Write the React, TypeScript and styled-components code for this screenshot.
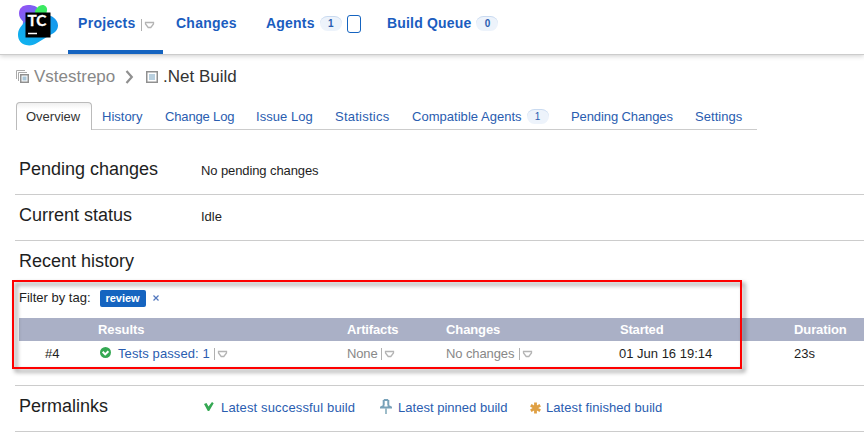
import React from 'react';
import styled, { createGlobalStyle } from 'styled-components';

const GlobalStyle = createGlobalStyle`
  * { box-sizing: border-box; }
  body {
    margin: 0;
    background: #fff;
    color: #1e1e1e;
    font: 13px/16px "Liberation Sans", Arial, sans-serif;
  }
`;

const Page = styled.div`
  width: 864px;
  height: 435px;
  overflow: hidden;
  background: #fff;
`;

const Header = styled.header`
  display: flex;
  height: 55px;
  padding-left: 18px;
  border-bottom: 1px solid #ccc;
  box-shadow: 0 1px 5px rgba(0, 0, 0, 0.2);
`;

const LogoBox = styled.a`
  width: 50px;
  padding-top: 5px;
`;

const NavItem = styled.a<{ $width: number; $active?: boolean; $after?: number }>`
  display: flex;
  align-items: center;
  width: ${p => p.$width}px;
  height: 54px;
  margin-right: ${p => p.$after ?? 0}px;
  padding: 0 0 ${p => (p.$active ? 4 : 8)}px 10px;
  border-bottom: ${p => (p.$active ? '4px' : '0')} solid #1564c0;
  color: #1b5dbf;
  font-size: 14px;
  font-weight: bold;
  white-space: nowrap;
`;

const NavText = styled.span<{ $spacing: number }>`
  letter-spacing: ${p => p.$spacing}px;
`;

const Badge = styled.span<{ $bold?: boolean; $gap: number }>`
  width: 22px;
  height: 15px;
  margin-left: ${p => p.$gap}px;
  border-top: 1px solid #c9daf0;
  border-radius: 8px;
  background: #edf3fb;
  color: #2a5db0;
  font-size: 10px;
  font-weight: ${p => (p.$bold ? 'bold' : 'normal')};
  line-height: 14px;
  letter-spacing: 0;
  text-align: center;
`;

const AgentBox = styled.span`
  width: 14px;
  height: 18px;
  margin: 2px 0 0 5px;
  border: 1px solid #1564c0;
  border-radius: 3px;
`;

const Breadcrumbs = styled.nav`
  display: flex;
  align-items: center;
  height: 47px;
  padding: 0 0 4px 16px;
  font-size: 17px;
  line-height: 20px;
  white-space: nowrap;
`;

const CrumbLink = styled.a`
  width: 86px;
  margin-left: 5px;
  color: #888;
`;

const CrumbCurrent = styled.span`
  margin-left: 5px;
  color: #333;
`;

const Chevron = styled.svg`
  margin: 0 12px 0 5px;
`;

const Tabs = styled.nav`
  display: flex;
  width: 741px;
  height: 28px;
  margin-left: 16px;
  border-bottom: 1px solid #ccc;
`;

const Tab = styled.a<{ $width: number; $active?: boolean; $spacing?: number }>`
  display: flex;
  align-items: center;
  width: ${p => p.$width}px;
  height: ${p => (p.$active ? 28 : 27)}px;
  padding: ${p => (p.$active ? '0 0 0 9px' : '2px 0 0 10px')};
  border: ${p => (p.$active ? '1px solid #bbb' : '0')};
  border-bottom: 0;
  border-radius: 4px 4px 0 0;
  background: ${p => (p.$active ? 'linear-gradient(#f0f0f0, #fff 6px)' : 'none')};
  color: ${p => (p.$active ? '#333' : '#2a5db0')};
  letter-spacing: ${p => p.$spacing ?? 0}px;
  white-space: nowrap;
`;

const Section = styled.section<{ $height: number; $top: number }>`
  display: flex;
  height: ${p => p.$height}px;
  margin-left: 15px;
  padding: ${p => p.$top}px 0 0 4px;
  border-bottom: 1px solid #ccc;
`;

const Heading = styled.h2`
  width: 182px;
  margin: 0;
  font-size: 18px;
  font-weight: normal;
  line-height: 22px;
  white-space: nowrap;
`;

const Detail = styled.div<{ $spacing?: number }>`
  padding-top: 5px;
  letter-spacing: ${p => p.$spacing ?? 0}px;
`;

const History = styled.section`
  position: relative;
  height: 145px;
  margin-left: 15px;
  padding: 9px 0 0 4px;
  border-bottom: 1px solid #ccc;
`;

const Filter = styled.div`
  display: flex;
  align-items: center;
  height: 18px;
  margin-top: 17px;
`;

const Tag = styled.span`
  width: 46px;
  height: 17px;
  margin: 1px 0 0 9px;
  border-radius: 2px;
  background: #1564c0;
  color: #fff;
  font-size: 11px;
  font-weight: bold;
  line-height: 16px;
  text-align: center;
`;

const RemoveIcon = styled.svg`
  margin-left: 7px;
`;

const Columns = styled.div`
  display: grid;
  grid-template-columns: 79px 249px 99px 173px 174px 71px;
  align-items: center;
  white-space: nowrap;
`;

const TableHead = styled(Columns)`
  height: 23px;
  margin-top: 11px;
  background: #aab0c6;
  color: #fff;
  font-weight: bold;
`;

const TableRow = styled(Columns)`
  height: 26px;
`;

const Cell = styled.div<{ $indent?: number; $tone?: string; $spacing?: number }>`
  display: flex;
  align-items: center;
  padding-left: ${p => p.$indent ?? 0}px;
  color: ${p => p.$tone ?? 'inherit'};
  letter-spacing: ${p => p.$spacing ?? 0}px;
`;

const Highlight = styled.div`
  position: absolute;
  top: 39px;
  left: -3px;
  width: 730px;
  height: 89px;
  border: 2px solid #fe0000;
  filter: drop-shadow(3px 3px 2px rgba(0, 0, 0, 0.5));
`;

const Permalink = styled.a<{ $width: number; $spacing?: number }>`
  display: flex;
  align-items: center;
  width: ${p => p.$width}px;
  height: 16px;
  margin-top: 5px;
  color: #2a5db0;
  letter-spacing: ${p => p.$spacing ?? 0}px;
  white-space: nowrap;
`;

const IconSlot = styled.span<{ $width: number; $indent?: number; $lift?: number }>`
  display: flex;
  flex: none;
  width: ${p => p.$width}px;
  padding-left: ${p => p.$indent ?? 0}px;
  padding-bottom: ${p => p.$lift ?? 0}px;
`;

const Arrow = styled.svg<{ $gap: number; $drop: number }>`
  flex: none;
  margin: ${p => p.$drop}px 0 0 ${p => p.$gap}px;
`;

const MenuArrow = ({ gap, drop = 0 }: { gap: number; drop?: number }) => (
  <Arrow $gap={gap} $drop={drop} width="14" height="12" viewBox="0 0 14 12" fill="none">
    <path d="M.5 0v12" stroke="#b0b0b0" />
    <path d="M4.500 3.500h8v1.500L9.800 8.500H7.200L4.500 5z" stroke="#b4b4b4" strokeWidth="1.300" />
  </Arrow>
);

const Logo = () => (
  <svg width="40" height="41" viewBox="0 0 40 41">
    <defs>
      <linearGradient id="violet" x1="0" y1="0" x2=".8" y2="1">
        <stop offset="0" stopColor="#9b4ef5" />
        <stop offset=".5" stopColor="#6b6cf2" />
        <stop offset="1" stopColor="#12b2ed" />
      </linearGradient>
      <linearGradient id="sky" x1="0" y1="1" x2="1" y2="0">
        <stop offset="0" stopColor="#10b4ef" />
        <stop offset="1" stopColor="#1695ec" />
      </linearGradient>
    </defs>
    <path d="M10 0C4.500 0 1 3.500 1 8.500c0 3 1.500 5.500 4 8L4.400 24 14 30l14-20-9.500-8C16.500.5 13 0 10 0z" fill="url(#violet)" />
    <path d="M17 6c2-4 4.500-6 7.500-6 3 0 5 2.500 4.500 5.500L27 15 17 9z" fill="#3bea62" />
    <path d="M30 10c6 1.500 10 5.500 10 10.500 0 4-3 7.500-7 9L19 38c-3 2-7 3-11 2-5-1-8-5-8-10 0-5 2-8 7-13z" fill="url(#sky)" />
    <rect x="7.500" y="7.500" width="25" height="25" fill="#000" />
    <text x="9.500" y="21.300" fill="#fff" fontFamily="Lato, sans-serif" fontSize="15" fontWeight="bold" stroke="#fff" strokeWidth=".3" textLength="19" lengthAdjust="spacingAndGlyphs">TC</text>
    <path d="M10 28.500h9" stroke="#fff" strokeWidth="1.500" />
  </svg>
);

const ProjectIcon = () => (
  <svg width="13" height="13" viewBox="0 0 13 13" fill="none">
    <path d="M.5 9V.5H9M2.500 11V2.500H11" stroke="#aaa" />
    <rect x="4.750" y="4.750" width="7.500" height="7.500" fill="#fff" stroke="#909090" strokeWidth="1.500" />
    <rect x="6.500" y="6.500" width="4" height="4" fill="#a9c6d8" />
  </svg>
);

const BuildIcon = () => (
  <svg width="12" height="12" viewBox="0 0 12 12">
    <rect x=".75" y=".75" width="10.500" height="10.500" fill="#fff" stroke="#909090" strokeWidth="1.500" />
    <rect x="3" y="3" width="6" height="6" fill="#b9d0df" />
  </svg>
);

const SuccessIcon = () => (
  <svg width="11" height="11" viewBox="0 0 11 11" fill="none">
    <circle cx="5.500" cy="5.500" r="5.500" fill="#35a853" />
    <path d="M2.700 4.700l2.500 2.700 3.200-3.200" stroke="#fff" strokeWidth="2" />
  </svg>
);

const CheckIcon = () => (
  <svg width="10" height="10" viewBox="0 0 10 10">
    <path d="M0 2l2.500-1 2 3.500L8 0l1.700 1.300L5.200 9H3.800z" fill="#35a853" />
  </svg>
);

const PinIcon = () => (
  <svg width="12" height="16" viewBox="0 0 12 16" fill="none">
    <path d="M3.800 1h4.400M3.700 1v5.500M8.300 1v5.500M1.500 8l2.500-1.500M10.500 8L8 6.500M0 8.500h12" stroke="#78a2b9" strokeWidth="2" />
    <path d="M6 9v6" stroke="#9dbcc9" strokeWidth="2" />
  </svg>
);

const StarIcon = () => (
  <svg width="11" height="12" viewBox="0 0 11 12">
    <path d="M5.500 .5v11M.8 3.200l9.400 5.600M10.200 3.200L.8 8.800" stroke="#dfa044" strokeWidth="2.800" />
  </svg>
);

export default function App() {
  return (
    <Page>
      <GlobalStyle />
      <Header>
        <LogoBox><Logo /></LogoBox>
        <NavItem $width={95} $after={3} $active><NavText $spacing={0.3}>Projects</NavText><MenuArrow gap={5} drop={3} /></NavItem>
        <NavItem $width={90}><NavText $spacing={0.25}>Changes</NavText></NavItem>
        <NavItem $width={121}><NavText $spacing={0.2}>Agents</NavText><Badge $bold $gap={5}>1</Badge><AgentBox /></NavItem>
        <NavItem $width={140}><NavText $spacing={0.18}>Build Queue</NavText><Badge $bold $gap={5}>0</Badge></NavItem>
      </Header>
      <Breadcrumbs>
        <ProjectIcon />
        <CrumbLink>Vstestrepo</CrumbLink>
        <Chevron width="9" height="14" viewBox="0 0 9 14" fill="none">
          <path d="M1.500 1l5.300 6-5.300 6" stroke="#909090" strokeWidth="2.200" />
        </Chevron>
        <BuildIcon />
        <CrumbCurrent>.Net Build</CrumbCurrent>
      </Breadcrumbs>
      <Tabs>
        <Tab $width={76} $active>Overview</Tab>
        <Tab $width={63}>History</Tab>
        <Tab $width={91} $spacing={-0.15}>Change Log</Tab>
        <Tab $width={79} $spacing={0.05}>Issue Log</Tab>
        <Tab $width={77} $spacing={0.25}>Statistics</Tab>
        <Tab $width={159} $spacing={0.03}>Compatible Agents<Badge $gap={5}>1</Badge></Tab>
        <Tab $width={124} $spacing={-0.1}>Pending Changes</Tab>
        <Tab $width={70} $spacing={0.05}>Settings</Tab>
      </Tabs>
      <Section $height={65} $top={28}>
        <Heading>Pending changes</Heading>
        <Detail $spacing={-0.1}>No pending changes</Detail>
      </Section>
      <Section $height={46} $top={9}>
        <Heading>Current status</Heading>
        <Detail>Idle</Detail>
      </Section>
      <History>
        <Heading>Recent history</Heading>
        <Filter>
          Filter by tag:<Tag>review</Tag>
          <RemoveIcon width="6" height="6" viewBox="0 0 6 6">
            <path d="M.5.5l5 5M5.500.5l-5 5" stroke="#5277bd" strokeWidth="1.200" />
          </RemoveIcon>
        </Filter>
        <TableHead>
          <Cell />
          <Cell $spacing={-0.1}>Results</Cell>
          <Cell $spacing={-0.15}>Artifacts</Cell>
          <Cell $spacing={-0.1}>Changes</Cell>
          <Cell $indent={1} $spacing={-0.2}>Started</Cell>
          <Cell $indent={1} $spacing={-0.1}>Duration</Cell>
        </TableHead>
        <TableRow>
          <Cell $indent={26}>#4</Cell>
          <Cell $indent={2} $tone="#2a5db0" $spacing={0.1}><IconSlot $width={18} $lift={3}><SuccessIcon /></IconSlot>Tests passed: 1<MenuArrow gap={4} /></Cell>
          <Cell $tone="#888" $spacing={-0.15}>None<MenuArrow gap={4} /></Cell>
          <Cell $tone="#888" $spacing={-0.1}>No changes<MenuArrow gap={5} /></Cell>
          <Cell>01 Jun 16 19:14</Cell>
          <Cell $indent={1}>23s</Cell>
        </TableRow>
        <Highlight />
      </History>
      <Section $height={46} $top={9}>
        <Heading>Permalinks</Heading>
        <Permalink $width={179} $spacing={0.15}><IconSlot $width={20} $indent={3} $lift={2}><CheckIcon /></IconSlot>Latest successful build</Permalink>
        <Permalink $width={150} $spacing={0.02}><IconSlot $width={18} $lift={2}><PinIcon /></IconSlot>Latest pinned build</Permalink>
        <Permalink $width={140} $spacing={0.07}><IconSlot $width={16} $lift={1}><StarIcon /></IconSlot>Latest finished build</Permalink>
      </Section>
    </Page>
  );
}
